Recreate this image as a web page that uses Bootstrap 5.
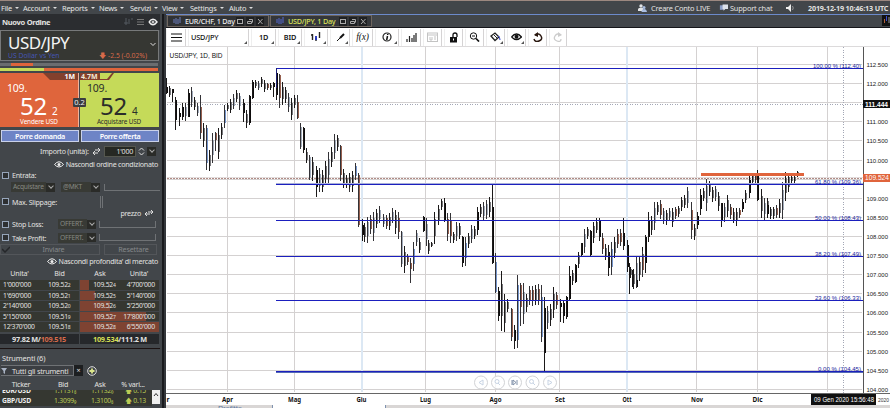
<!DOCTYPE html>
<html lang="it">
<head>
<meta charset="utf-8">
<title>USD/JPY, 1 Day</title>
<link rel="stylesheet" href="https://cdn.jsdelivr.net/npm/bootstrap@5.3.0/dist/css/bootstrap.min.css">
<style>
html,body{height:408px;overflow:hidden}
body{font:8px/10px "Noto Sans",sans-serif;background:#42464a;color:#e2e2e0;width:890px}
svg{display:block;flex:none}
.topmenu{height:14px;border-top:1px solid #9c8880;background:#42464a;font-size:7.4px;letter-spacing:-.2px}
.topmenu .m{color:#e6e6e6;white-space:nowrap;flex:none}
.topmenu .m::after{content:"";display:inline-block;border:2px solid transparent;border-top-color:#ddd;border-bottom:0;margin-left:3px;vertical-align:1.5px}
.m1{width:23px;padding-left:1px}.m2{width:39px}.m3{width:37px}.m4{width:31px}.m5{width:32px}.m6{width:28px}.m7{width:39px}.m8{width:40px}
.conto{width:72px;padding-left:4px;flex:none}.chat{width:58px;flex:none;padding-left:2px}
.clock{width:81px;margin-left:13px;margin-right:1px;letter-spacing:-.16px;font-size:7.2px;flex:none}
.side{width:160px;height:394px;flex:none}
.gut{width:6px;flex:none;background:linear-gradient(90deg,#42464a 0 2px,#191a1d 2px 4px,#34373b 4px)}
.side>div{flex:none}
.phead{height:16px;background:#2b2d30;font-weight:700;font-size:7.5px;letter-spacing:-.3px;padding:0 2px}
.symbox{height:31px;background:#363733;border:1px solid #77797a;position:relative;margin-right:1px;padding:3px 7px 0}
.symname{font:17px/18px "Noto Sans",sans-serif;color:#f3f3f3;letter-spacing:-.55px;height:18px}
.symsub{font-size:6.8px;line-height:8px;height:8px}
.symsub .red{margin-right:4px}
.caret{right:2px;top:11px}
.blu{color:#4556b4}.red{color:#d76a4a}.yel{color:#d5df55}
.slide{height:7px;padding-top:2px}.slide .trk{height:3px;background:#6a6d70;width:158px;padding-left:11px}
.slide .knob{display:block;width:22px;height:3px;background:#df643c}
.bar2{height:5px}.bar2 span{display:block;height:3px}
.bl{width:44px;background:#c5da59}.br{width:114px;background:#df653c}
.quote{height:54px;position:relative;width:79px}
.q1{background:#df653c;color:#fff;border-right:1px solid #efb29b}.q2{background:#c5da59;color:#2b2d2a;margin-left:1px}
.quote .big{position:absolute;left:20px;top:20px;font:24px/25px "Noto Sans",sans-serif;letter-spacing:-.2px}
.quote .pip{position:absolute;left:52px;top:32px;font-size:10px;line-height:12px}
.quote .int{position:absolute;left:7px;top:9px;font-size:10.5px;line-height:13px;letter-spacing:-.2px}
.quote .cap{position:absolute;left:0;width:78px;text-align:center;bottom:1px;font-size:6.4px;line-height:8px;letter-spacing:-.15px}
.quote .vol{position:absolute;top:0;font-size:7px;line-height:8px;font-weight:700}
.v1{right:3px}.v2{left:1px;color:#f2e9d8}
.spread{position:absolute;left:73px;top:25px;width:13px;height:9px;background:#3b3d40;color:#eee;font-size:7.5px;line-height:9px;text-align:center;border-radius:1px}
.orders{padding:3px 0 0 1px;gap:2px;height:18px}
.obtn,.obtn:hover{width:78px;height:12px;background:#6e84c6;border:1px solid #c9d1ea;color:#fff;border-radius:0;font-size:7.2px;line-height:9px;padding:0;font-weight:600;letter-spacing:-.35px}
.fr{font-size:7.1px;letter-spacing:-.25px;white-space:nowrap}
.rr{padding-right:2px}.qty{padding-left:40px}
.h8{height:8px}.h9{height:9px;padding-right:7px}.h10{height:10px}.h12{height:12px}.h13{height:13px}.h14{height:14px}.h16{height:16px;padding-left:11px}
.inp{background:#262823;border:1px solid #55574f;height:11px;line-height:9px;width:37px;padding-right:2px}
.cb{width:7px;height:7px;border:1px solid #96a5ba;background:#2d2f31;margin:0 3px 0 2px;flex:none}
.lab{width:46px;flex:none}
.sel{background:#383a35;color:#878983;height:10px;line-height:10px;font-size:6.7px;padding-left:2px;flex:none}
.s1{width:35px}.s2{width:30px;margin-left:6px}.s3{width:29px}
.arr{width:9px;height:9px;background:#2a2b28;display:flex;align-items:center;justify-content:center;flex:none}
.arr::after{content:"";width:4px;height:4px;border:solid #aaa;border-width:0 1px 1px 0;transform:translateY(-1px) rotate(45deg)}
.ghost{height:7px;border-bottom:1px solid #6f7275;border-left:1px solid #6f7275}
.g1{margin-left:43px;width:3px;height:12px;border-bottom:0;border-right:1px solid #6f7275}
.g2{width:57px;margin-left:3px;border-right:1px solid #6f7275}
.acts{height:12px;gap:4px}
.gbtn{height:11px;line-height:9px;border:1px solid #53565a;color:#85888a;font-size:7.2px;text-align:center;letter-spacing:-.2px}
.ga{width:100px;padding-left:7px}.gb{width:53px;padding-left:6px}
.tickmark{left:1px;top:1px}
.hd{font-size:7.1px;letter-spacing:-.15px;text-align:center;height:14px;padding-top:2px}
.c39{width:39px}.c41{width:41px}.c40{width:40px}.c38{width:38px}.c42{width:42px}.c32{width:32px}.c34{width:34px}
.dep{display:grid;grid-template-columns:39px 40px 40px 39px;font-size:6.8px;column-gap:.3px}
.dep span{height:10.6px;line-height:10px;letter-spacing:-.25px;border-bottom:1px solid #42464a;white-space:nowrap}
.dep .a{background:#353731;padding-left:3px}.dep .b{background:#353731;text-align:center}
.dep .c{text-align:right;padding-right:4px;background:linear-gradient(90deg,#7e4332 var(--w),#353731 var(--w))}
.dep small{font-size:5px}
.tot{height:11px;font-weight:700;font-size:7.3px;line-height:10px;gap:1px;padding-top:1px}
.tot div{background:#26282b;width:79px;height:10px;white-space:nowrap;letter-spacing:-.25px}
.ta{padding-right:13px}.tz{padding-left:13px}
.sep{height:5px;border-bottom:1px solid #1b1212}
.strum{height:14px;padding:2px 2px 0;font-size:7.4px;line-height:14px;letter-spacing:-.15px}
.filt{height:16px;padding-left:1px}
.fbox{border:1px solid #6f7275;border-left:0;width:73px;height:11px;background:#3b3e42;font-size:7.3px}
.fx{width:9px;height:11px;background:#1d1f21;text-align:center;line-height:10px}
.thead1{height:11px}
.ticks{width:152px}.clip{height:6px;overflow:hidden;display:flex;align-items:flex-end}
.tick{display:grid;grid-template-columns:54px 37px 34px 27px;font-size:6.8px;line-height:10px;letter-spacing:-.2px;background:#353731;color:#bccc55;white-space:nowrap}
.tick span:first-child{color:#eee;font-weight:700;padding-left:2px}
.scr{width:8px;height:14px;background:#efefef}
.view{width:724px}
.tabs{height:14px;border-top:1px solid #6c8acb;border-bottom:1.5px solid #15161a;padding-left:1px;gap:1px}
.tb{height:12px;width:102px;border:1px solid #6f665f;background:#303235;font-size:7.2px;white-space:nowrap;padding-left:5px;letter-spacing:-.22px;color:#eee;font-weight:500}
.tb.on{color:#dbe35a;background:#34363a}
.tools{height:19px;background:#fff;color:#111;font:600 7.3px/12px "Noto Sans",sans-serif;letter-spacing:-.15px;border-bottom:1px solid #dcdadb}
.tc{height:17px;border-right:1px solid #d5d3d4;border-left:1px solid #eee;margin-right:2px;position:relative;flex:none;display:flex;align-items:center;justify-content:center}
.tc.d::after{content:"";position:absolute;right:1px;bottom:2px;border:solid transparent;border-width:3px 0 0 3px;border-right:3px solid #555;border-left:0;border-bottom:0}
.tsym{padding-left:2px;font-weight:500}
.fn{font:italic 9.5px/12px "Liberation Serif",serif}
.w20{width:20px}.w61{width:61px}.w25{width:25px}.w24{width:24px}.w21{width:21px}.w19{width:19px}.w18{width:18px}
</style>
<script src="https://cdn.jsdelivr.net/npm/bootstrap@5.3.0/dist/js/bootstrap.bundle.min.js"></script>
</head>
<body>
<nav class="topmenu d-flex align-items-center">
<span class="m m1">File</span><span class="m m2">Account</span><span class="m m3">Reports</span><span class="m m4">News</span><span class="m m5">Servizi</span><span class="m m6">View</span><span class="m m7">Settings</span><span class="m m8">Aiuto</span>
<span class="ms-auto d-flex align-items-center text-nowrap">
<svg width="9" height="8" viewBox="0 0 9 8"><g fill="#e2e4e6"><circle cx="3" cy="2" r="1.700"/><path d="M0 7V5l1-1h4v3z"/></g><g fill="#a9bde0"><circle cx="6" cy="3.600" r="1.500"/><path d="M3.500 8c0-4 5-4 5.500 0z"/></g></svg>
<span class="conto">Creare Conto LIVE</span>
<svg width="9" height="8" viewBox="0 0 10 8"><rect y="1" x="1" width="5" height="5" fill="#8da0c8"/><path d="M4 0h6v5H7L5 7V5H4z" fill="#dde2ea"/></svg>
<span class="chat">Support chat</span>
<svg width="9" height="8" viewBox="0 0 9 8"><path d="M0 3h2l3-3v8L2 5H0z" fill="#eee"/><path d="M6.500 2q1.500 2 0 4" stroke="#999" fill="none"/></svg>
<b class="clock">2019-12-19 10:46:13 UTC</b></span>
</nav>
<div class="d-flex">
<aside class="side d-flex flex-column">
<div class="phead d-flex align-items-center"><span>Nuovo Ordine</span>
<svg class="ms-auto" width="34" height="8" viewBox="0 0 34 8" fill="none" stroke="#c8c8c8"><path d="M2 0v7M5 1v5M0 5h4M7 1h2" stroke="#555b60"/><path d="M13 1.500h7M13 4h7M13 6.500h7" stroke="#777"/><path d="M25 4q4-5.500 8 0q-4 5.500-8 0" stroke="#eee" stroke-width="1.400"/><circle cx="29" cy="4" r="1" fill="#eee"/></svg></div>
<div class="symbox"><div class="symname">USD/JPY</div><div class="symsub d-flex justify-content-between"><span class="blu">US Dollar vs Yen</span><span class="red">🡇 -2.5 (-0.02%)</span></div>
<svg class="position-absolute caret" width="6" height="5" viewBox="0 0 6 5"><path d="M.5 1L3 3.500 5.500 1" stroke="#ddd" fill="none"/></svg></div>
<div class="slide"><div class="trk"><span class="knob"></span></div></div>
<div class="bar2 d-flex"><span class="bl"></span><span class="br"></span></div>
<div class="d-flex position-relative">
<div class="quote q1"><svg class="position-absolute end-0 top-0" width="35" height="7" viewBox="0 0 35 7"><path d="M0 0h35v7H7z" fill="#83402d"/></svg><span class="vol v1">1M</span><span class="int">109.</span><span class="big">52</span><span class="pip">2</span><span class="cap">Vendere USD</span></div>
<div class="quote q2"><svg class="position-absolute start-0 top-0" width="34" height="7" viewBox="0 0 34 7"><path d="M0 0h34l-5 7H0z" fill="#83402d"/><path d="M20 0h12l-5 6h-7z" fill="#c5da59"/></svg><span class="vol v2">4.7M</span><span class="int">109.</span><span class="big">52</span><span class="pip">4</span><span class="cap">Acquistare USD</span></div>
<span class="spread">0.2</span></div>
<div class="d-flex orders"><button class="btn obtn">Porre domanda</button><button class="btn obtn">Porre offerta</button></div>
<div class="fr h12 qty d-flex align-items-center">Importo (unità): <svg class="mx-1" width="7" height="7" viewBox="0 0 7 7"><path d="M0 5h5M2 3L0 5l2 2M2 2h5M5 0l2 2-2 2" stroke="#ddd" fill="none"/></svg><span class="inp ms-auto text-end">1'000</span><svg width="11" height="9" viewBox="0 0 11 9"><path d="M3 3.500L5.500 1 8 3.500M3 5.500L5.500 8 8 5.500" stroke="#ddd" fill="none"/></svg><span class="arr me-1"></span></div>
<div class="fr h14 rr d-flex align-items-center justify-content-end"><svg width="10" height="7" viewBox="0 0 10 7"><path d="M0.500 3.500q4.500-5.500 9 0q-4.500 5-9 0" stroke="#eee" fill="none"/><circle cx="5" cy="3.500" r="1.500" fill="#eee"/></svg>&nbsp;Nascondi ordine condizionato</div>
<div class="fr h8 d-flex align-items-center"><span class="cb"></span>Entrata:</div>
<div class="fr h16 d-flex align-items-center"><span class="sel s1">Acquistare</span><span class="arr"></span><span class="sel s2">@MKT</span><span class="arr"></span><span class="ghost flex-fill ms-1"></span></div>
<div class="fr h13 d-flex align-items-center"><span class="cb"></span>Max. Slippage:<span class="ghost g1"></span></div>
<div class="fr h9 d-flex align-items-center justify-content-end">prezzo <svg class="ms-1" width="8" height="6" viewBox="0 0 8 6"><path d="M0 4h5M2 2L0 4l2 2M3 2h5M6 0l2 2-2 2" stroke="#ddd" fill="none"/></svg></div>
<div class="fr h14 d-flex align-items-center"><span class="cb"></span><span class="lab">Stop Loss:</span><span class="sel s3">OFFERT.</span><span class="arr"></span><span class="ghost g2"></span></div>
<div class="fr h13 d-flex align-items-center"><span class="cb"></span><span class="lab">Take Profit:</span><span class="sel s3">OFFERT.</span><span class="arr"></span><span class="ghost g2"></span></div>
<div class="d-flex acts"><span class="gbtn ga position-relative"><svg class="position-absolute tickmark" width="8" height="7" viewBox="0 0 8 7"><path d="M0 3l3 3 5-5" fill="none" stroke="#25272a" stroke-width="1.500"/></svg>Inviare</span><span class="gbtn gb">Resettare</span></div>
<div class="fr h10 rr d-flex align-items-center justify-content-end"><svg width="10" height="7" viewBox="0 0 10 7"><path d="M0.500 3.500q4.500-5.500 9 0q-4.500 5-9 0" stroke="#eee" fill="none"/><circle cx="5" cy="3.500" r="1.500" fill="#eee"/></svg>&nbsp;Nascondi profondita' di mercato</div>
<div class="d-flex hd"><span class="c39">Unita'</span><span class="c41">Bid</span><span class="c40">Ask</span><span class="c38">Unita'</span></div>
<div class="dep" id="depth"></div>
<div class="tot d-flex"><div class="text-end ta">97.82 M/<span class="red">109.515</span></div><div class="tz"><span class="yel">109.534</span>/111.2 M</div></div>
<div class="sep"></div>
<div class="fr strum">Strumenti (6)</div>
<div class="d-flex align-items-center fr filt"><span class="d-flex align-items-center fbox"><svg class="me-1" width="7" height="7" viewBox="0 0 7 7"><path d="M0 1h6L4 4v3L2.500 6V4z" fill="#aab4c4"/></svg>Tutti gli strumenti</span><span class="fx">×</span><svg class="ms-1" width="10" height="10" viewBox="0 0 10 10"><circle cx="5" cy="5" r="4.300" fill="none" stroke="#ddd"/><path d="M5 2.500v5M2.500 5h5" stroke="#dbe68a" stroke-width="1.800"/></svg></div>
<div class="d-flex fr text-center thead1"><span class="c42">Ticker</span><span class="c42">Bid</span><span class="c32">Ask</span><span class="c34">% vari...</span></div>
<div class="d-flex"><div class="ticks"><div class="clip"><div class="tick"><span>EUR/USD</span><span>1.1131₈</span><span>1.1132₀</span><span>🡅 0.15</span></div></div><div class="tick"><span>GBP/USD</span><span>1.3099₉</span><span>1.3100₈</span><span>🡅 0.13</span></div></div><div class="scr"><svg width="8" height="11" viewBox="0 0 8 11"><path d="M2 6l2-2.500L6 6" stroke="#333" fill="none"/></svg></div></div>
</aside>
<div class="gut"></div>
<main class="view">
<div class="tabs d-flex">
<div class="tb d-flex align-items-center"><svg class="me-1" width="8" height="8" viewBox="0 0 8 8"><path d="M1 2v4M3 1v6M5 2v5M7 0v6" stroke="#6d7fc0"/></svg>EUR/CHF, 1 Day<svg class="ms-auto me-1" width="28" height="9" viewBox="0 -1 28 9" fill="none" stroke="#aaa"><path d="M0-1h8v9H0zM10-1h8v9h-8zM20-1h8v9h-8z" fill="#1f2022" stroke="none"/><rect x="1.500" y="1.500" width="5" height="4"/><path d="M11.500 3.500h4v2h-4zM13 1.500h3.500v3M22 1l4.500 5M26.500 1L22 6"/></svg></div>
<div class="tb on d-flex align-items-center"><svg class="me-1" width="8" height="8" viewBox="0 0 8 8"><path d="M1 2v4M3 1v6M5 2v5M7 0v6" stroke="#5468d0"/></svg>USD/JPY, 1 Day<svg class="ms-auto me-1" width="28" height="9" viewBox="0 -1 28 9" fill="none" stroke="#aaa"><path d="M0-1h8v9H0zM10-1h8v9h-8zM20-1h8v9h-8z" fill="#1f2022" stroke="none"/><rect x="1.500" y="1.500" width="5" height="4"/><path d="M11.500 3.500h4v2h-4zM13 1.500h3.500v3M22 1l4.500 5M26.500 1L22 6"/></svg></div>
<svg class="ms-auto" width="8" height="11" viewBox="0 0 8 11"><path d="M0 0h8v11H0z" fill="#111"/><path d="M2.500 4v4" stroke="#b0603c"/><path d="M4.500 1v5" stroke="#3b4bd0"/><path d="M7 2v6" stroke="#999"/></svg>
</div>
<div class="tools d-flex align-items-center">
<div class="tc w20"><svg width="11" height="9" viewBox="0 0 11 9"><path d="M0 1h11M0 4.500h11M0 8h11" stroke="#111" stroke-width="1.200"/></svg></div>
<div class="tc d w61 justify-content-start tsym">USD/JPY</div>
<div class="tc d w25">1D</div><div class="tc d w24">BID</div>
<div class="tc d w24"><svg width="11" height="10" viewBox="0 0 11 10"><path d="M1.500 2v6M5 4v5M8.500 0v6M0 3h2M4 7h2" stroke="#222" stroke-width="1.400"/><path d="M5 4v4" stroke="#2436d8" stroke-width="1.600"/></svg></div>
<div class="tc d w20"><svg width="9" height="9" viewBox="0 0 9 9"><path d="M1 8l4-4" stroke="#111" stroke-width="1"/><path d="M4 5l4-4" stroke="#111" stroke-width="2"/></svg></div>
<div class="tc w21 fn">f(x)</div>
<div class="tc d w24"><svg width="10" height="10" viewBox="0 0 10 10"><circle cx="5" cy="5" r="4" fill="none" stroke="#222" stroke-width="1.200"/><path d="M5.500 4L4.700 8M5.700 2v1" stroke="#111" stroke-width="1.500"/></svg></div>
<div class="tc w20"><svg width="11" height="9" viewBox="0 0 11 9"><path d="M1 9V6M3.500 9V3M6 9V5M8 9V2M10 9V0" stroke="#222" stroke-width="1.200"/></svg></div>
<div class="tc w19"><svg width="11" height="10" viewBox="0 0 11 10" fill="none" stroke="#c3c3c3"><rect x=".5" y="1" width="10" height="8.500"/><path d="M0 3h11M3 5v3M5 5v3h-2M8 4v4"/></svg></div>
<div class="tc w19"><svg width="9" height="11" viewBox="0 0 9 11"><rect x="1" y="5" width="7" height="5.500" fill="#111"/><path d="M4 5V3q0-2 2-2t2 2v2" fill="none" stroke="#111" stroke-width="1.300"/><path d="M4.500 6.500v2" stroke="#fff"/></svg></div>
<div class="tc w19"><svg width="11" height="10" viewBox="0 0 11 10" fill="none" stroke="#111"><circle cx="4.500" cy="4" r="3.200"/><path d="M3 4h3"/><path d="M7 6.500l3 3" stroke-width="1.700"/></svg></div>
<div class="tc d w19"><svg width="11" height="10" viewBox="0 0 11 10" fill="none" stroke="#222"><path d="M1 4l4-3 4 4-4 3.500z" stroke-width="1.300"/><path d="M4 3l3 3"/><path d="M8 4q2 1 2 4" stroke="#2c3dd0"/></svg></div>
<div class="tc d w19"><svg width="11" height="8" viewBox="0 0 11 8"><path d="M.5 4q5-6 10 0q-5 5-10 0" fill="none" stroke="#111" stroke-width="1.300"/><circle cx="5.500" cy="3.800" r="2" fill="#111"/></svg></div>
<div class="tc w19"><svg width="10" height="10" viewBox="0 0 10 10"><path d="M2 3q4-2.500 6 1t-2 5-5-2" fill="none" stroke="#2a1810" stroke-width="1.500"/><path d="M1 3l4-3v5z" fill="#2a1810"/></svg></div>
<div class="tc w18"><svg width="10" height="10" viewBox="0 0 10 10"><path d="M8 3q-4-2.500-6 1t2 5 4-2" fill="none" stroke="#ccc" stroke-width="1.300"/><path d="M9 3L5 0v5z" fill="#ccc"/></svg></div>
</div>
<svg id="chart" width="724" height="361" viewBox="166 47 724 361" font-family="Liberation Sans,sans-serif" shape-rendering="crispEdges"></svg>
</main>
</div>
<script>
// Order book: unit, bid, bid pip, ask, ask pip, unit, fill of the ask cell, fill of the unit cell
const book=[["1'000'000","109.52","2","109.52","4","4'700'000",23,0],["1'690'000","109.52","1","109.52","5","5'140'000",38,0],["2'140'000","109.52","0","109.52","6","5'250'000",75,0],["5'150'000","109.51","9","109.52","7","17'800'000",100,67],["12'370'000","109.51","8","109.52","8","6'550'000",100,100]];
depth.innerHTML=book.map(r=>`<span class="a">${r[0]}</span><span class="b">${r[1]}<small>${r[2]}</small></span><span class="c" style="--w:${r[6]}%">${r[3]}<small>${r[4]}</small></span><span class="c" style="--w:${r[7]}%">${r[5]}</span>`).join('');

let s='<path d="M166 47h724v361H166z" fill="#fff"/>';
const line=(x1,y1,x2,y2,c,w=1,e='')=>s+=`<line x1="${x1}" y1="${y1}" x2="${x2}" y2="${y2}" stroke="${c}" stroke-width="${w}" ${e}/>`;
const text=(x,y,t,z,c,w,a='start',e='')=>s+=`<text x="${x}" y="${y}" font-size="${z}" fill="${c}" textLength="${w}" lengthAdjust="spacingAndGlyphs" text-anchor="${a}" ${e}>${t}</text>`;
for(let i=0;i<18;i++){
  const y=Math.floor(64.4+i*19.12)+.5,p=(112.5-i*.5).toFixed(3);
  line(167,y,862,y,'#d4d1d1');
  if(i!==2&&i!==6)text(866.5,y+2,p,6,'#222',21.5);
}
[227,294,425,495,559,696,757,827].forEach(x=>line(x+.5,47,x+.5,392,'#d4d1d1'));
[362,627].forEach(x=>line(x,47,x,392,'#dce8f4',2));
line(167,104.500,863,104.500,'#a3a7b5',1,'stroke-dasharray="1 1.500"');
line(843.500,47,843.500,393,'#a3a7b5',1,'stroke-dasharray="1 1.500"');
line(167,177.500,863,177.500,'#e2dddd');
line(167,178.500,863,178.500,'#b08c86',1,'stroke-dasharray="2 1"');

// Candles per block: origin x, origin y, then [x, high, low, kind, open, close] in thirds of a pixel
const blocks=[
[165,60,"5,55,102,k,80,100;14,78,112;23,88,125,k,88,100;32,110,210,k,120,180;43,145,198,k,160,172;51,130,180,k,142,172;60,130,182,g;69,88,170,k,100,170;78,80,140,g;88,110,150;97,128,168,g;106,105,238,r,140,220;115,188,262;124,195,330,b,205,308;133,270,332;143,220,308,g;152,215,272,r,220,240;160,205,298;169,190,238;178,135,205,b;188,130,152;196,118,160;206,103,148,g;215,90,125;224,98,150,g;234,118,185,k,130,160;243,150,203;252,105,195,k,108,190;261,60,118,k,65,115;271,60,85;279,62,90,g;289,50,80;298,60,97;307,68,90,r;316,70,90;325,65,110,k,70,80;334,25,120,k,40,105;343,42,143,r,45,115;352,65,135;361,80,128;370,98,157,g;379,115,180;389,105,145;398,105,177,r,125,175;407,188,267,g,200,260;416,200,278,k,205,270;425,265,310;434,285,360,g,290,355;443,290,362;453,318,410,k,330,380;462,325,397,g;471,330,397;480,303,373;489,275,370,g;499,262,320;508,222,297,g;517,225,272;526,255,362,r,257,345;535,327,385,r;544,345,385,r;553,340,395,g;562,332,395"],
[340,120,"1,78,180,r,78,160;10,148,203;19,165,203;28,160,208;47,128,180,b;56,160,320,r,165,315;66,298,362,k,315,345;74,308,365;83,290,368,g;92,285,342,r;101,275,362,g;110,267,325;119,257,310,g;129,282,322,g;138,285,328,r;148,280,330;157,265,310,g;166,270,342;175,277,357,r;184,333,440,g,336,432;193,378,458;202,402,435,r;211,415,488,r,430,447;220,367,452,b;229,330,377,g;238,355,400;249,288,337,k,290,332;258,295,377,g;266,360,402;275,365,382;284,275,373;294,255,315;303,237,270;312,235,307,k,250,300;321,280,362,r;330,280,370,r;339,335,370;349,307,362,g;358,308,357;367,348,440,k,350,430;376,350,437,b;385,338,385;395,315,370,g;403,317,357;412,262,345,k,275,330;421,253,290;431,245,302,g;440,240,298,g;449,232,290;458,195,432,k,262,430"],
[480,170,"47,248,370,b,275,365;56,350,452,k,362,438;65,303,482;74,372,487;83,388,427;93,415,513,r,418,500;102,465,537,k,480,512;112,315,535,b,345,510;121,340,468,r,345,410;130,338,463,g;139,372,425;148,348,405,r;157,348,408,r;166,345,405;175,342,405,r;184,345,515,b,380,500;194,380,605,k,415,550;203,408,477,g;212,402,467;221,350,445;230,365,417,r;240,388,455,k,398,410;249,390,460,k,400,438;258,378,447,k,380,440;267,288,393,k,318,388;276,300,345;285,283,340,k,285,335;295,245,293;304,218,262,k,220,255;313,177,250,g;322,170,208;331,180,260,k,182,256;340,155,220;349,145,190;358,145,212,k,150,200;368,190,252,r;377,222,270;386,225,318,k;394,215,315,b;404,202,265;413,178,235,r;422,178,227,r;431,145,240,k,190,228;441,210,307,k,225,292;449,280,372,k,290,325;458,300,352;468,258,355,k,285,350;477,258,333,r;487,232,320;495,195,307,g"],
[630,150,"1,350,385;10,358,418;18,318,415,g;28,325,393;37,302,380,r;45,255,370,k,260,340;55,187,275,k,212,262;64,198,255;73,155,240,g;82,155,195;91,150,208,r;101,173,222,g;110,180,225;119,175,210,g;128,175,230;137,170,207,r;146,168,200;155,140,182;164,135,173;173,110,175,g;183,155,267,r;192,222,270;201,185,238,k;210,118,195,k;219,115,152;228,88,183,g;238,92,137;247,112,155;256,108,152,g;265,125,182;274,158,230,k,160,212;283,160,215,g;292,135,200;301,162,207,r;310,175,220;320,173,228;329,175,203,r;338,148,187,k;347,120,158;357,75,145,k;366,70,105;375,68,98,r;383,60,152,k,75,150;393,118,205;402,143,210,g;411,145,185"],
[740,150,"81,155,205,k;90,170,207;99,170,207;108,165,205,r;117,147,203;127,95,207,g;136,65,152;146,68,125;155,75,98;164,75,98;173,62,82"]];
const fill={k:'#0d0b0b',g:'#a2acbb',r:'#96604f',b:'#7696cc'};
for(const [ox,oy,d] of blocks)for(const c of d.split(';')){
  let [x,h,l,k,o,e]=c.split(',');x=Math.floor(ox+x/3);h=+h;l=+l;
  const solid=k==='k';
  o=o?+o:h+(l-h)*.22;e=e?+e:h+(l-h)*.75;
  s+=`<rect x="${x}" y="${oy+o/3}" width="2" height="${Math.max(1,(e-o)/3)}" fill="${k?fill[k]:'#77777b'}"/>`;
  s+=`<rect x="${x}" y="${oy+h/3}" width="1" height="${(l-h)/3}" fill="${solid||!k?'#1b1919':'#333236'}"/>`;
}
// Fibonacci levels
[[68,'100.00 % (112.40)',813],[184,'61.80 % (109.36)',815],[220,'50.00 % (108.43)',815],[256,'38.20 % (107.49)',815],[300,'23.60 % (106.33)',815],[371,'0.00 % (104.45)',818]].forEach(([y,t,x])=>{
  line(276,y+.5,863,y+.5,'#1b1fbe');
  if(y===184)line(276,183.500,863,183.500,'#a7aed8');
  if(y===371)line(276,372.500,863,372.500,'#5469b5');
  text(x,y-.5,t,6,'#20259c',861-x);
});
s+='<path d="M276 68h1v20h-1z" fill="#1b1f70"/><path d="M701 173h103v3H701z" fill="#e0643c"/>';
text(169.500,57.500,'USD/JPY, 1D, BID',7.300,'#111',53);
line(863.500,47,863.500,393,'#555');
line(166,393.500,890,393.500,'#666');
s+='<path d="M863 100h27v8h-27z" fill="#111"/><path d="M863 173.500h27v8h-27z" fill="#e0643c"/>';
text(865,106.600,'111.444',6.500,'#fff',23,'start','font-weight="bold"');
text(865,180,'109.524',6.700,'#fff',24);
[['r',168,3],['Apr',227.500,11],['Mag',294.500,13],['Giu',361.500,10],['Lug',425.500,11],['Ago',495.500,12],['Set',560,10],['Ott',627,9],['Nov',697,12],['Dic',757.500,10]].forEach(([t,x,w])=>text(x,401.500,t,7,'#111',w,'middle','font-weight="bold" font-family="Noto Sans"'));
s+='<path d="M811 394h65v11h-65z" fill="#111"/>';
text(814,402,'09 Gen 2020 15:56:48',6.500,'#fff',60);
text(878,402,'2020',5.500,'#333',11);
s+='<path d="M166 404.500h106v4H166zM386 404.500h425v4H386zM811 405h79v3h-79z" fill="#d9d6d5"/><path d="M272 404.500h1v4h-1zM385 404.500h1v4h-1z" fill="#7f93b0"/>';
text(218,410.500,'Profitto',7,'#5b77a0',24);
// Navigation buttons
s+='<g shape-rendering="auto" fill="#fff" fill-opacity=".75" stroke="#d2d3d6">';
[[481,'M483 380l-4 2.500 4 2.500z'],[498,'M500 385l-2-2M499 381.500a2 2 0 1 0-4 0a2 2 0 1 0 4 0'],[515,'M513 380v5l3-2.500zM517 380v5M512 380v5'],[532.500,'M535 385l-2-2M533.500 381.500a2 2 0 1 0-4 0a2 2 0 1 0 4 0'],[550,'M548 380l4 2.500-4 2.500z']].forEach(([x,d],i)=>s+=`<circle cx="${x}" cy="382.500" r="6.500"/><path d="${d}" stroke="${i===2?'#7f8fa8':'#c8d4e4'}" fill="none"/>`);
chart.innerHTML=s+'</g>';
</script>
</body>
</html>
